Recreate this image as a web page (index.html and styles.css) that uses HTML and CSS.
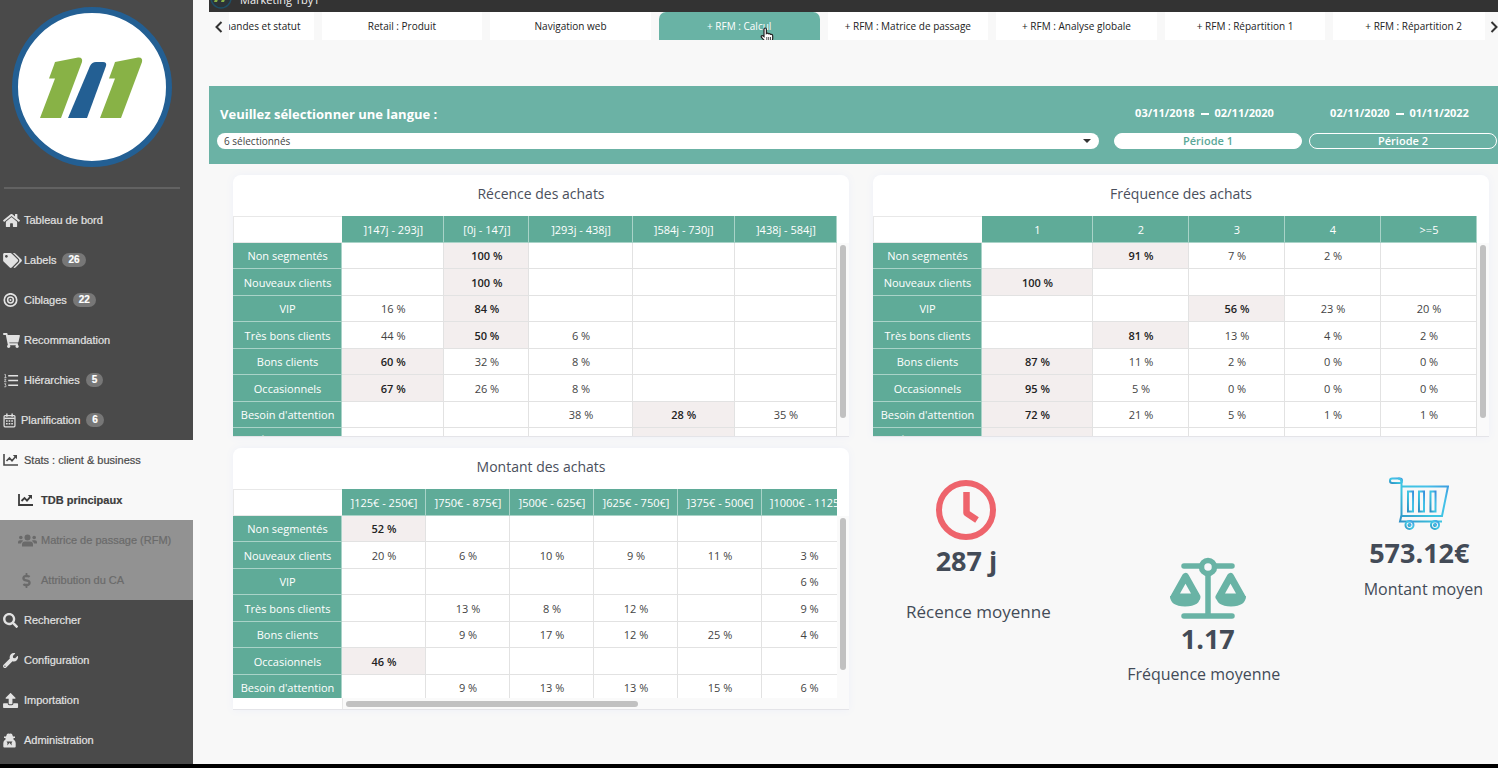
FILE: index.html
```html
<!DOCTYPE html>
<html lang="fr">
<head>
<meta charset="utf-8">
<meta name="viewport" content="width=device-width, initial-scale=1">
<title>Marketing 1by1</title>
<link rel="stylesheet" href="styles.css">
</head>
<body>
<div class="app">
  <aside class="sidebar">
    <a class="brand" href="#" aria-label="Accueil">
      <svg viewBox="0 0 160 160">
        <circle cx="80" cy="80" r="77" fill="#fff" stroke="#235f93" stroke-width="6"/>
        <path d="M43 55L66 50.500Q71 50 70 55L49 111H28L43 71.500H37L42 58Z" fill="#88b246"/>
        <path d="M78 59Q80 55 84 55H91Q95 55 94 59L75 111H56Z" fill="#235f93"/>
        <path d="M103 55L126 50.500Q131 50 130 55L109 111H88L103 71.500H97L102 58Z" fill="#88b246"/>
      </svg>
    </a>
    <hr class="rule">
    <nav class="menu">
      <a href="#"><svg class="ico" viewBox="0 0 576 512"><path d="M280.370 148.260L96 300.110V464a16 16 0 0 0 16 16l112.060-.290a16 16 0 0 0 15.920-16V368a16 16 0 0 1 16-16h64a16 16 0 0 1 16 16v95.640a16 16 0 0 0 16 16.050L464 480a16 16 0 0 0 16-16V300L295.670 148.260a12.190 12.190 0 0 0-15.300 0zM571.600 251.470L488 182.560V44.050a12 12 0 0 0-12-12h-56a12 12 0 0 0-12 12v72.610L318.470 43a48 48 0 0 0-61 0L4.340 251.470a12 12 0 0 0-1.600 16.900l25.500 31A12 12 0 0 0 45.150 301l235.220-193.740a12.190 12.190 0 0 1 15.300 0L530.900 301a12 12 0 0 0 16.900-1.600l25.500-31a12 12 0 0 0-1.700-16.930z"/></svg>Tableau de bord</a>
      <a href="#"><svg class="ico ico-wide" viewBox="0 0 640 512"><path d="M497.941 225.941L286.059 14.059A48 48 0 0 0 252.118 0H48C21.490 0 0 21.490 0 48v204.118a48 48 0 0 0 14.059 33.941l211.882 211.882c18.744 18.745 49.136 18.746 67.882 0l204.118-204.118c18.745-18.745 18.745-49.137 0-67.882zM112 160c-26.510 0-48-21.490-48-48s21.490-48 48-48 48 21.490 48 48-21.490 48-48 48zm513.941 133.823L421.823 497.941c-18.745 18.745-49.137 18.745-67.882 0l-.360-.360L527.640 323.522c16.999-16.999 26.360-39.600 26.360-63.640s-9.362-46.641-26.360-63.640L331.397 0h48.721a48 48 0 0 1 33.941 14.059l211.882 211.882c18.745 18.745 18.745 49.137 0 67.882z"/></svg>Labels<span class="badge">26</span></a>
      <a href="#"><svg class="ico" viewBox="0 0 17 15"><g fill="none" stroke="currentColor"><circle cx="7.500" cy="7" r="6.200" stroke-width="1.700"/><circle cx="7.500" cy="7" r="2.900" stroke-width="1.500"/></g><circle cx="7.500" cy="7" r="1"/></svg>Ciblages<span class="badge">22</span></a>
      <a href="#"><svg class="ico" viewBox="0 0 576 512"><path d="M528.120 301.319l47.273-208C578.806 78.301 567.391 64 551.990 64H159.208l-9.166-44.810C147.758 8.021 137.930 0 126.529 0H24C10.745 0 0 10.745 0 24v16c0 13.255 10.745 24 24 24h69.883l70.248 343.435C147.325 417.100 136 435.222 136 456c0 30.928 25.072 56 56 56s56-25.072 56-56c0-15.674-6.447-29.835-16.824-40h209.647C430.447 426.165 424 440.326 424 456c0 30.928 25.072 56 56 56s56-25.072 56-56c0-22.172-12.888-41.332-31.579-50.405l5.517-24.276c3.413-15.018-8.002-29.319-23.403-29.319H218.117l-6.545-32h293.145c11.206 0 20.920-7.754 23.403-18.681z"/></svg>Recommandation</a>
      <a href="#"><svg class="ico" viewBox="0 0 16 16"><g fill="none" stroke="currentColor"><path d="M4.500 3H15M4.500 8H15M4.500 13H15" stroke-width="1.500"/><path d="M.500 1.500H1.500V5M.300 5H2.700M.300 6.700H2L.500 9.300H2.700M.300 11.500H2L1.300 12.700 2.300 13.500 1.800 14.700H.300" stroke-width=".800"/></g></svg>Hiérarchies<span class="badge">5</span></a>
      <a href="#"><svg class="ico ico-narrow" viewBox="0 0 13 16"><g fill="none" stroke="currentColor"><rect x=".700" y="2.700" width="11.600" height="12" rx="1" stroke-width="1.300"/><path d="M1 5.700H12" stroke-width="1.600"/><path d="M3.700 .500V4M9.300 .500V4" stroke-width="1.500"/><path d="M2.800 8.500H10.200M2.800 11.500H10.200" stroke-width="1.700" stroke-dasharray="1.700 1.100"/></g></svg>Planification<span class="badge">6</span></a>
      <a href="#" class="open"><svg class="ico" viewBox="0 0 17 15"><g fill="none" stroke="currentColor" stroke-width="1.600"><path d="M1 1V12H15"/><path d="M3.500 8L6.500 5 9 7.700 12.500 3.700"/></g><path d="M9.800 2H14V6.200Z"/></svg>Stats : client &amp; business</a>
      <a href="#" class="sub current" aria-current="page"><svg class="ico" viewBox="0 0 17 15"><g fill="none" stroke="currentColor" stroke-width="1.800"><path d="M1 1V12H15"/><path d="M3.500 8L6.500 5 9 7.700 12.500 3.700"/></g><path d="M9.800 2H14V6.200Z"/></svg>TDB principaux</a>
      <a href="#" class="sub muted"><svg class="ico ico-wide" viewBox="0 0 19 14"><circle cx="9.500" cy="4" r="3"/><circle cx="2.800" cy="4" r="1.800"/><circle cx="16.200" cy="4" r="1.800"/><path d="M4 13V11Q4 8 7 8H12Q15 8 15 11V13ZM0 10V8.500Q0 6.700 2 6.700H4.500L5 7.500Q3 8.600 3 10ZM19 10V8.500Q19 6.700 17 6.700H14.500L14 7.500Q16 8.600 16 10Z"/></svg>Matrice de passage (RFM)</a>
      <a href="#" class="sub muted"><svg class="ico" viewBox="-112 0 512 512"><path d="M209.200 233.400l-108-31.600C88.700 198.200 80 186.500 80 173.500c0-16.300 13.200-29.500 29.500-29.500h66.300c12.200 0 24.200 3.700 34.200 10.500 6.100 4.100 14.300 3.100 19.500-2l34.800-34c7.100-6.900 6.100-18.400-1.800-24.500C238 74.800 207.400 64.100 176 64V16c0-8.800-7.200-16-16-16h-32c-8.800 0-16 7.200-16 16v48h-2.500C45.800 64-5.400 118.700.500 183.600c4.200 46.100 39.400 83.600 83.800 96.600l102.500 30c12.500 3.700 21.200 15.300 21.200 28.300 0 16.300-13.200 29.500-29.500 29.500h-66.300C100 368 88 364.300 78 357.500c-6.100-4.100-14.300-3.100-19.500 2l-34.800 34c-7.100 6.900-6.100 18.400 1.800 24.500 24.500 19.200 55.100 29.900 86.500 30v48c0 8.800 7.200 16 16 16h32c8.800 0 16-7.200 16-16v-48.200c46.600-.900 90.300-28.600 105.700-72.700 21.500-61.600-14.600-124.800-72.500-141.700z"/></svg>Attribution du CA</a>
      <a href="#"><svg class="ico" viewBox="0 0 576 512"><path d="M505 442.700L405.300 343c-4.500-4.500-10.600-7-17-7H372c27.600-35.300 44-79.700 44-128C416 93.100 322.900 0 208 0S0 93.100 0 208s93.100 208 208 208c48.300 0 92.700-16.400 128-44v16.300c0 6.400 2.500 12.500 7 17l99.700 99.700c9.400 9.400 24.600 9.400 33.900 0l28.300-28.300c9.400-9.400 9.400-24.600.100-34zM208 336c-70.700 0-128-57.200-128-128 0-70.700 57.200-128 128-128 70.700 0 128 57.200 128 128 0 70.700-57.200 128-128 128z"/></svg>Rechercher</a>
      <a href="#"><svg class="ico" viewBox="0 0 576 512"><path d="M507.730 109.100c-2.240-9.030-13.540-12.090-20.120-5.510l-74.360 74.360-67.880-11.310-11.310-67.880 74.360-74.360c6.620-6.620 3.430-17.900-5.660-20.160-47.380-11.740-99.550.910-136.580 37.930-39.640 39.640-50.550 97.100-34.050 147.200L18.740 402.760c-24.990 24.990-24.990 65.510 0 90.500 24.990 24.990 65.510 24.990 90.500 0l213.210-213.210c50.120 16.710 107.470 5.680 147.370-34.220 37.070-37.070 49.700-89.320 37.910-136.730zM64 472c-13.250 0-24-10.750-24-24 0-13.260 10.750-24 24-24s24 10.740 24 24c0 13.250-10.750 24-24 24z"/></svg>Configuration</a>
      <a href="#"><svg class="ico" viewBox="0 0 576 512"><path d="M296 384h-80c-13.300 0-24-10.700-24-24V192h-87.700c-17.800 0-26.700-21.500-14.100-34.100L242.300 5.700c7.500-7.500 19.800-7.500 27.300 0l152.200 152.200c12.600 12.600 3.700 34.100-14.100 34.100H320v168c0 13.300-10.700 24-24 24zm216-8v112c0 13.300-10.700 24-24 24H24c-13.300 0-24-10.700-24-24V376c0-13.300 10.700-24 24-24h136v8c0 30.900 25.100 56 56 56h80c30.900 0 56-25.100 56-56v-8h136c13.300 0 24 10.700 24 24z"/></svg>Importation</a>
      <a href="#"><svg class="ico" viewBox="0 0 17 15"><path d="M4 1Q5 0 6.500 .700 8 0 9 1L10 3.500H12V5H10.500V6.500Q12.700 7.700 12.700 10V13.500Q12.700 14.500 11.700 14.500H1.300Q.300 14.500 .300 13.500V10Q.300 7.700 2.500 6.500V5H1V3.500H3ZM3.500 8.500L4.500 10 4.300 12.500 6 10.500 6.500 9.500 7 10.500 8.700 12.500 8.500 10 9.500 8.500Z" fill-rule="evenodd"/></svg>Administration</a>
    </nav>
  </aside>

  <main class="main">
    <header class="topbar">
      <svg class="topbar-logo" viewBox="0 0 22 22"><circle cx="11" cy="11" r="10" fill="#2b3338" stroke="#1f4f66" stroke-width="1.500"/><path d="M7 7H10L7 15H4ZM14 7H17L14 15H11Z" fill="#88b246"/></svg>
      <span class="topbar-name">Marketing 1by1</span>
    </header>

    <div class="tabbar">
      <button class="arrow" type="button" aria-label="Onglets précédents"><svg viewBox="0 0 8 12"><path d="M6.500 1L1.500 6 6.500 11"/></svg></button>
      <div class="tab-window">
        <div class="tabs" role="tablist">
          <button class="tab" role="tab" type="button">Retail : Commandes et statut</button>
          <button class="tab" role="tab" type="button">Retail : Produit</button>
          <button class="tab" role="tab" type="button">Navigation web</button>
          <button class="tab active" role="tab" type="button" aria-selected="true">+ RFM : Calcul<svg class="pointer" viewBox="0 0 14 17"><path d="M4 9.500V2.500Q4 1 5.200 1 6.400 1 6.400 2.500V6.500Q7.600 5.600 8.500 6.800 9.800 6.200 10.600 7.400 12.500 7 12.700 9V11.500Q12.500 13.500 11.500 14.500V16H5.500V14.700L1.500 10.500Q.700 9 2 8.600 3 8.500 4 9.500Z" fill="#fff" stroke="#222" stroke-width="1.200"/><path d="M6.800 10V13.500M8.700 10V13.500M10.500 10V13.500" stroke="#222" stroke-width=".800"/></svg></button>
          <button class="tab" role="tab" type="button">+ RFM : Matrice de passage</button>
          <button class="tab" role="tab" type="button">+ RFM : Analyse globale</button>
          <button class="tab" role="tab" type="button">+ RFM : Répartition 1</button>
          <button class="tab" role="tab" type="button">+ RFM : Répartition 2</button>
        </div>
      </div>
      <button class="arrow" type="button" aria-label="Onglets suivants"><svg viewBox="0 0 8 12"><path d="M1.500 1L6.500 6 1.500 11"/></svg></button>
    </div>

    <section class="filters">
      <div class="language">
        <label for="langue">Veuillez sélectionner une langue :</label>
        <div class="select-wrap">
          <select id="langue"><option>6 sélectionnés</option></select>
        </div>
      </div>
      <div class="period">
        <div class="dates"><span>03/11/2018</span><i class="dash"></i><span>02/11/2020</span></div>
        <button class="pill pill-full" type="button">Période 1</button>
      </div>
      <div class="period">
        <div class="dates"><span>02/11/2020</span><i class="dash"></i><span>01/11/2022</span></div>
        <button class="pill" type="button">Période 2</button>
      </div>
    </section>

    <div class="board">
      <section class="card">
        <h2>Récence des achats</h2>
        <div class="pane">
          <div class="view">
            <table class="data">
              <colgroup><col class="w109"><col class="w102"><col class="w85"><col class="w103"><col class="w102"><col class="w102"></colgroup>
              <thead><tr><td class="corner"></td><th>]147j - 293j]</th><th>[0j - 147j]</th><th>]293j - 438j]</th><th>]584j - 730j]</th><th>]438j - 584j]</th></tr></thead>
              <tbody>
                <tr><th>Non segmentés</th><td></td><td class="hot">100 %</td><td></td><td></td><td></td></tr>
                <tr><th>Nouveaux clients</th><td></td><td class="hot">100 %</td><td></td><td></td><td></td></tr>
                <tr><th>VIP</th><td>16 %</td><td class="hot">84 %</td><td></td><td></td><td></td></tr>
                <tr><th>Très bons clients</th><td>44 %</td><td class="hot">50 %</td><td>6 %</td><td></td><td></td></tr>
                <tr><th>Bons clients</th><td class="hot">60 %</td><td>32 %</td><td>8 %</td><td></td><td></td></tr>
                <tr><th>Occasionnels</th><td class="hot">67 %</td><td>26 %</td><td>8 %</td><td></td><td></td></tr>
                <tr><th>Besoin d'attention</th><td></td><td></td><td>38 %</td><td class="hot">28 %</td><td>35 %</td></tr>
                <tr><th>À réactiver</th><td></td><td></td><td></td><td class="hot"></td><td></td></tr>
              </tbody>
            </table>
          </div>
          <div class="vbar"><span class="vthumb"></span></div>
        </div>
      </section>

      <section class="card">
        <h2>Fréquence des achats</h2>
        <div class="pane">
          <div class="view">
            <table class="data">
              <colgroup><col class="w109"><col class="w111"><col class="w96"><col class="w96"><col class="w96"><col class="w96"></colgroup>
              <thead><tr><td class="corner"></td><th>1</th><th>2</th><th>3</th><th>4</th><th>&gt;=5</th></tr></thead>
              <tbody>
                <tr><th>Non segmentés</th><td></td><td class="hot">91 %</td><td>7 %</td><td>2 %</td><td></td></tr>
                <tr><th>Nouveaux clients</th><td class="hot">100 %</td><td></td><td></td><td></td><td></td></tr>
                <tr><th>VIP</th><td></td><td></td><td class="hot">56 %</td><td>23 %</td><td>20 %</td></tr>
                <tr><th>Très bons clients</th><td></td><td class="hot">81 %</td><td>13 %</td><td>4 %</td><td>2 %</td></tr>
                <tr><th>Bons clients</th><td class="hot">87 %</td><td>11 %</td><td>2 %</td><td>0 %</td><td>0 %</td></tr>
                <tr><th>Occasionnels</th><td class="hot">95 %</td><td>5 %</td><td>0 %</td><td>0 %</td><td>0 %</td></tr>
                <tr><th>Besoin d'attention</th><td class="hot">72 %</td><td>21 %</td><td>5 %</td><td>1 %</td><td>1 %</td></tr>
                <tr><th>À réactiver</th><td class="hot"></td><td></td><td></td><td></td><td></td></tr>
              </tbody>
            </table>
          </div>
          <div class="vbar"><span class="vthumb"></span></div>
        </div>
      </section>

      <section class="card">
        <h2>Montant des achats</h2>
        <div class="pane pane-x">
          <div class="view">
            <table class="data data-wide">
              <colgroup><col class="w109"><col class="w84"><col class="w84"><col class="w84"><col class="w84"><col class="w84"><col class="w95"></colgroup>
              <thead><tr><td class="corner"></td><th>]125€ - 250€]</th><th>]750€ - 875€]</th><th>]500€ - 625€]</th><th>]625€ - 750€]</th><th>]375€ - 500€]</th><th>]1000€ - 1125€]</th></tr></thead>
              <tbody>
                <tr><th>Non segmentés</th><td class="hot">52 %</td><td></td><td></td><td></td><td></td><td></td></tr>
                <tr><th>Nouveaux clients</th><td>20 %</td><td>6 %</td><td>10 %</td><td>9 %</td><td>11 %</td><td>3 %</td></tr>
                <tr><th>VIP</th><td></td><td></td><td></td><td></td><td></td><td>6 %</td></tr>
                <tr><th>Très bons clients</th><td></td><td>13 %</td><td>8 %</td><td>12 %</td><td></td><td>9 %</td></tr>
                <tr><th>Bons clients</th><td></td><td>9 %</td><td>17 %</td><td>12 %</td><td>25 %</td><td>4 %</td></tr>
                <tr><th>Occasionnels</th><td class="hot">46 %</td><td></td><td></td><td></td><td></td><td></td></tr>
                <tr><th>Besoin d'attention</th><td></td><td>9 %</td><td>13 %</td><td>13 %</td><td>15 %</td><td>6 %</td></tr>
              </tbody>
            </table>
          </div>
          <div class="vbar"><span class="vthumb"></span></div>
          <div class="hbar"><span class="hthumb"></span></div>
        </div>
      </section>

      <section class="kpis">
        <div class="kpi kpi-recency">
          <svg class="kpi-icon" viewBox="0 0 60 60" fill="none" stroke="#ee646c" stroke-width="6"><circle cx="30" cy="30" r="27"/><path d="M30.500 12V33L41 40" stroke-width="6.500" stroke-linejoin="round"/></svg>
          <strong>287 j</strong>
          <span class="kpi-label">Récence moyenne</span>
        </div>
        <div class="kpi kpi-frequency">
          <svg class="kpi-icon kpi-scales" viewBox="0 0 76 62"><g fill="none" stroke="#69b3a5" stroke-linecap="round" stroke-linejoin="round"><path d="M14 9H62M14 59H62" stroke-width="5.500"/><path d="M38 16V58" stroke-width="5.500" stroke-linecap="butt"/><path d="M15.500 19.500L4 40H27ZM60.500 19.500L49 40H72Z" stroke-width="7"/></g><path d="M0 39H30Q31 49 15 49.500 0 49 0 39ZM46 39H76Q76 49 61 49.500 46 49 46 39Z" fill="#69b3a5"/><circle cx="38" cy="10" r="6.500" fill="#f7f7fa" stroke="#69b3a5" stroke-width="5.500"/></svg>
          <strong>1.17</strong>
          <span class="kpi-label">Fréquence moyenne</span>
        </div>
        <div class="kpi kpi-amount">
          <svg class="kpi-icon kpi-cart" viewBox="0 0 60 54">
            <defs><linearGradient id="cart" x1="0" y1="1" x2="1" y2="0"><stop offset="0" stop-color="#2f8fc4"/><stop offset=".4" stop-color="#3cc5e0"/><stop offset=".7" stop-color="#45c0e8"/><stop offset="1" stop-color="#3a8fdc"/></linearGradient></defs>
            <g fill="none" stroke="url(#cart)" stroke-width="2"><rect x="1" y="1.500" width="12" height="4.500" rx="2.200"/><path d="M9 1.500Q12.500 1.500 12.500 5V39H53L59 9.500H12.500M12.500 38L11 44.500H53"/><rect x="19" y="14.500" width="5" height="20"/><rect x="30" y="14.500" width="5" height="20"/><rect x="41.500" y="14.500" width="5" height="20"/><circle cx="20.500" cy="48" r="4"/><circle cx="46" cy="48" r="4"/><circle cx="20.500" cy="48" r="1"/><circle cx="46" cy="48" r="1"/></g>
          </svg>
          <strong>573.12€</strong>
          <span class="kpi-label">Montant moyen</span>
        </div>
      </section>
    </div>
  </main>
</div>
</body>
</html>
```
FILE: styles.css
```css
* { box-sizing: border-box; }

body {
  margin: 0;
  background: #000;
  font-family: "Open Sans", "Noto Sans", sans-serif;
  font-size: 11px;
  color: #444;
}

button, select { font: inherit; color: inherit; margin: 0; }

.app {
  display: flex;
  min-height: calc(100vh - 4px);
  background: #f8f8f8;
}

/* Sidebar */
.sidebar {
  flex: 0 0 193px;
  background: #4a4a4a;
  color: #e2e2e2;
  font-family: "Liberation Sans", Arial, sans-serif;
}
.brand { display: block; width: 160px; margin: 7px 0 0 12px; }
.brand svg { display: block; width: 160px; height: 160px; }
.rule {
  height: 2px;
  margin: 20px 13px 11px 4px;
  border: 0;
  background: #626262;
}
.menu a {
  display: flex;
  align-items: center;
  height: 40px;
  padding-left: 3px;
  color: inherit;
  text-decoration: none;
  white-space: nowrap;
  -webkit-text-stroke: 0.200px currentColor;
}
.ico { flex: none; width: 17px; height: 15px; margin-right: 4px; fill: currentColor; }
.ico-wide { width: 19px; margin-right: 2px; }
.ico-narrow { width: 13px; margin-right: 5px; }
.menu .open { background: #f8f8f8; color: #4a4a4a; }
.menu .sub { padding-left: 18px; }
.menu .sub .ico { margin-right: 6px; }
.menu .sub .ico-wide { margin-right: 4px; }
.menu .current { background: #f8f8f8; color: #3c3c3c; font-weight: bold; }
.menu .muted { background: #929292; color: #6a6a6a; }
.badge {
  margin-left: 6px;
  padding: 0 6px;
  border-radius: 8px;
  background: #777;
  color: #fff;
  font-size: 10px;
  line-height: 14px;
  font-weight: bold;
}

/* Header and tabs */
.main { flex: 1; min-width: 0; padding-left: 16px; }
.topbar {
  display: flex;
  align-items: flex-end;
  gap: 8px;
  height: 12px;
  padding-left: 1px;
  overflow: hidden;
  background: #333;
  color: #f2f2f2;
  line-height: 16px;
}
.topbar-logo { flex: none; width: 22px; height: 22px; margin-bottom: 3px; }
.topbar-name { margin-bottom: 4px; font-weight: 500; }

.tabbar { display: flex; height: 28px; }
.arrow {
  flex: none;
  display: flex;
  align-items: center;
  justify-content: center;
  width: 20px;
  padding: 2px 0 0;
  border: 0;
  background: none;
}
.arrow:last-child { width: 13px; justify-content: flex-end; }
.arrow svg { flex: none; width: 8px; height: 12px; fill: none; stroke: #333; stroke-width: 2; }
.tab-window { flex: 1; min-width: 0; overflow: hidden; }
.tabs {
  display: grid;
  grid-template-columns: repeat(8, 1fr);
  gap: 8px;
  height: 100%;
  margin: 0 -9px 0 -76px;
}
.tab {
  position: relative;
  padding: 0;
  border: 0;
  background: #fff;
  color: #222;
  font-size: 10px;
  white-space: nowrap;
}
.active { border-radius: 7px 7px 0 0; background: #69b3a5; color: #fff; }
.pointer { position: absolute; left: 101px; top: 15px; width: 14px; height: 17px; }

/* Filters */
.filters {
  display: grid;
  grid-template-columns: 1fr 188px 188px;
  gap: 7px;
  height: 78px;
  margin-top: 46px;
  padding: 17px 1px 15px 8px;
  background: #6bb2a5;
  color: #fff;
}
.language, .period { display: flex; flex-direction: column; justify-content: space-between; }
.language { margin-right: 8px; }
.language label { padding-left: 3px; font-size: 13px; line-height: 22px; font-weight: 700; }
.select-wrap { position: relative; display: flex; }
.select-wrap::after {
  content: "";
  position: absolute;
  right: 8px;
  top: 6px;
  border: 4px solid transparent;
  border-top-color: #333;
  border-bottom: 0;
}
.language select {
  flex: 1;
  height: 16px;
  padding: 0 7px;
  border: 0;
  border-radius: 8px;
  background: #fff;
  color: #444;
  font-size: 10px;
  appearance: none;
}
.dates {
  display: flex;
  justify-content: center;
  align-items: center;
  gap: 6px;
  padding-right: 7px;
  line-height: 20px;
  font-weight: 700;
}
.dash { width: 8px; height: 2px; margin-top: 2px; background: #fff; }
.pill {
  height: 16px;
  padding: 0;
  border: 1px solid #fff;
  border-radius: 8px;
  background: none;
  color: #fff;
  line-height: 14px;
  font-weight: 600;
}
.pill-full { background: #fff; color: #5aa898; }

/* Cards and tables */
.board {
  display: grid;
  grid-template-columns: 1fr 1fr;
  gap: 11px 24px;
  padding: 11px 9px 0 24px;
}
.card {
  min-width: 0;
  align-self: start;
  border-radius: 8px 8px 0 0;
  background: #fff;
  box-shadow: 0 0 8px #eef0f8;
}
.card h2 {
  margin: 0;
  height: 41px;
  padding-bottom: 4px;
  color: #4a4f5c;
  font-size: 14px;
  line-height: 37px;
  font-weight: 400;
  text-align: center;
}
.pane { display: grid; grid-template-columns: 1fr 12px; border-bottom: 1px solid #e4e4e8; }
.view { min-width: 0; height: 220px; overflow: hidden; }
.pane-x .view { height: 209px; }
.data {
  width: 100%;
  table-layout: fixed;
  border-spacing: 0;
  line-height: 16px;
  text-align: center;
}
.data-wide { width: calc(100% + 20px); }
.data th, .data td {
  padding: 1px 0 0 1px;
  overflow: hidden;
  border-right: 1px solid #e2e2e2;
  border-bottom: 1px solid #e2e2e2;
  white-space: nowrap;
}
.data th {
  border-color: #a9d3c8;
  background: #5fab98;
  color: #fff;
  font-weight: 500;
}
.data .corner { border: 1px solid #e8e8e8; border-right: 0; }
.data .hot { background: #f3eeee; color: #222; font-weight: 600; }
.data tr { height: 26px; }
.data thead tr, .data tbody tr:nth-child(even) { height: 27px; }
.w84 { width: 84px; }
.w85 { width: 85px; }
.w95 { width: 95px; }
.w96 { width: 96px; }
.w102 { width: 102px; }
.w103 { width: 103px; }
.w109 { width: 109px; }
.w111 { width: 111px; }

.vbar {
  display: flex;
  justify-content: center;
  margin-top: 27px;
  padding: 2px 0 18px;
  background: #fafafa;
}
.pane-x .vbar { padding-bottom: 28px; }
.vthumb { width: 6px; border-radius: 3px; background: #c1c1c1; }
.hbar {
  grid-column: 1 / -1;
  display: flex;
  align-items: center;
  height: 11px;
  margin-left: 109px;
  padding-left: 3px;
  border-left: 1px solid #e8e8e8;
  background: #fafafa;
}
.hthumb { width: 58%; height: 6px; border-radius: 3px; background: #c1c1c1; }

/* Key figures */
.kpis {
  display: grid;
  grid-template-columns: 187fr 296fr 133fr;
  color: #434b57;
}
.kpi { display: flex; flex-direction: column; align-items: center; white-space: nowrap; }
.kpi strong { margin-top: 3px; font-size: 27px; line-height: 36px; }
.kpi-label { font-size: 16px; line-height: 24px; }
.kpi-icon { width: 60px; height: 60px; }
.kpi-scales { width: 76px; height: 62px; }
.kpi-cart { height: 54px; }
.kpi-recency { padding-top: 32px; }
.kpi-recency .kpi-label { margin-top: 21px; padding-left: 24px; font-size: 17px; }
.kpi-frequency { padding-top: 109px; }
.kpi-frequency strong { margin-top: 2px; }
.kpi-frequency .kpi-label { margin-top: 5px; padding-right: 8px; }
.kpi-amount { padding: 29px 6px 0 0; }
.kpi-amount strong { margin-top: 4px; }
.kpi-amount .kpi-label { margin-top: 6px; padding-left: 8px; }
```
